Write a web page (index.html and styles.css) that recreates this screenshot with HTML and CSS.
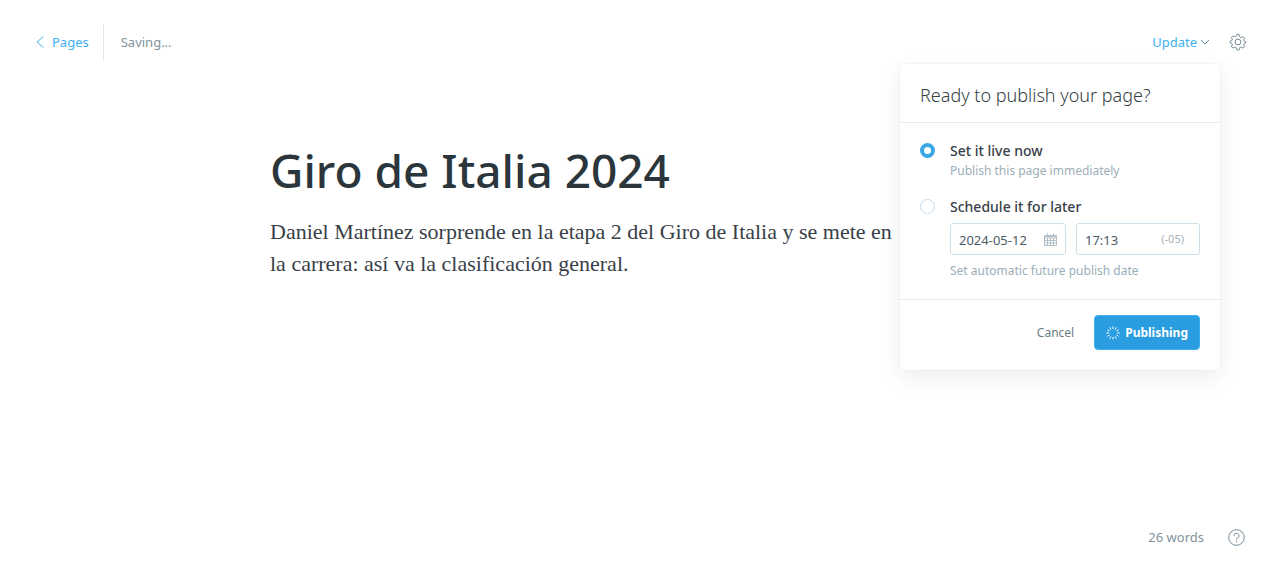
FILE: index.html
```html
<!DOCTYPE html>
<html lang="en">
<head>
<meta charset="utf-8">
<meta name="viewport" content="width=device-width, initial-scale=1">
<title>Giro de Italia 2024</title>
<link rel="stylesheet" href="styles.css">
</head>
<body>
<div class="editor">
  <header class="topbar">
    <div class="topbar-left">
      <a class="back" href="#"><svg class="back-icon" viewBox="0 0 8 12" aria-hidden="true"><path d="M7.500.5 1 6l6.500 5.500"/></svg>Pages</a>
      <span class="status">Saving...</span>
    </div>
    <div class="topbar-right">
      <div class="publish">
        <button class="update" type="button">Update<svg class="chevron" viewBox="0 0 10 6" aria-hidden="true"><path d="M1 1l4 4 4-4"/></svg></button>
        <form class="menu">
          <h2 class="menu-title">Ready to publish your page?</h2>
          <div class="menu-body">
            <div class="option">
              <input class="radio" type="radio" name="when" id="now" checked>
              <div class="option-text">
                <label class="option-label" for="now">Set it live now</label>
                <p class="hint">Publish this page immediately</p>
              </div>
            </div>
            <div class="option">
              <input class="radio" type="radio" name="when" id="later">
              <div class="option-text">
                <label class="option-label" for="later">Schedule it for later</label>
                <div class="fields">
                  <div class="field">
                    <input class="field-input" type="text" value="2024-05-12" aria-label="Date">
                    <svg class="calendar" viewBox="0 0 13 13" aria-hidden="true"><path d="M.5 2.500h12v10H.5zM.5 5h12M.5 7.500h12M.5 10h12M3.500 5v7.500M6.500 5v7.500M9.500 5v7.500M.5 3.500h12M3.500.3v2.500M9.500.3v2.500"/></svg>
                  </div>
                  <div class="field field-time">
                    <input class="field-input" type="text" value="17:13" aria-label="Time">
                    <span class="zone">(-05)</span>
                  </div>
                </div>
                <p class="hint">Set automatic future publish date</p>
              </div>
            </div>
          </div>
          <div class="menu-footer">
            <button class="cancel" type="button">Cancel</button>
            <button class="submit" type="button"><svg class="spinner" viewBox="-7 -7 14 14" aria-hidden="true"><path d="M0-6.500V-4M0 4v2.500M-6.500 0H-4M4 0h2.500M3.250-5.630 2-3.460M-3.250-5.630-2-3.460M3.250 5.630 2 3.460M-3.250 5.630-2 3.460M5.630-3.250 3.460-2M-5.630-3.250-3.460-2M5.630 3.250 3.460 2M-5.630 3.250-3.460 2"/></svg>Publishing</button>
          </div>
        </form>
      </div>
      <button class="icon-button" type="button" aria-label="Settings"><svg class="gear" viewBox="0 0 24 24" aria-hidden="true"><circle cx="12" cy="12" r="4.300"/><path d="M13.700 1.300l.6 2.400a2.200 2.200 0 0 0 3.100 1.300l2.200-1.200 2.300 2.300-1 2.100a2.200 2.200 0 0 0 1.300 3.100l1.600.5v1.400l-1.600.5a2.200 2.200 0 0 0-1.300 3.100l1 2.100-2.300 2.300-2.200-1.200a2.200 2.200 0 0 0-3.100 1.300l-.6 2.400h-3.400l-.6-2.400a2.200 2.200 0 0 0-3.100-1.300l-2.200 1.200-2.300-2.300 1-2.100a2.200 2.200 0 0 0-1.300-3.100L.2 13.200v-2.400l1.600-.5a2.200 2.200 0 0 0 1.300-3.100l-1-2.100 2.300-2.300 2.200 1.200a2.200 2.200 0 0 0 3.100-1.300l.6-2.400z"/></svg></button>
    </div>
  </header>
  <main class="post">
    <h1 class="post-title">Giro de Italia 2024</h1>
    <p class="post-text">Daniel Martínez sorprende en la etapa 2 del Giro de Italia y se mete en<br>la carrera: así va la clasificación general.</p>
  </main>
  <footer class="bottombar">
    <span class="count">26 words</span>
    <button class="icon-button" type="button" aria-label="Help"><svg class="help" viewBox="0 0 17 17" aria-hidden="true"><circle cx="8.500" cy="8.500" r="7.800"/><path d="M6 6.800a2.500 2.500 0 1 1 3.700 2.100c-.8.5-1.200.9-1.200 1.900M8.500 12v1.200"/></svg></button>
  </footer>
</div>
</body>
</html>
```
FILE: styles.css
```css
* {
  box-sizing: border-box;
}

body {
  margin: 0;
  background: #fff;
  color: #394047;
  font: 13px/20px "Noto Sans", "Open Sans", sans-serif;
}

h1, h2, p {
  margin: 0;
}

button {
  padding: 0;
  border: 0;
  background: none;
  font: inherit;
  cursor: pointer;
}

svg {
  display: block;
  flex: none;
  fill: none;
  stroke: currentColor;
}

.editor {
  display: flex;
  flex-direction: column;
  min-height: 100vh;
}

.topbar {
  display: flex;
  justify-content: space-between;
  align-items: center;
  padding: 24px 34px 0 36px;
}

.topbar-left,
.topbar-right {
  display: flex;
  align-items: center;
}

.back {
  display: flex;
  align-items: center;
  gap: 8px;
  height: 36px;
  padding-right: 14px;
  border-right: 1px solid #dfe7ec;
  color: #3eb0ef;
  text-decoration: none;
}

.back-icon {
  width: 8px;
  height: 12px;
}

.status {
  padding-left: 17px;
  color: #7f949d;
}

.topbar-right {
  gap: 20px;
}

.publish {
  position: relative;
}

.update {
  display: flex;
  align-items: center;
  gap: 3px;
  color: #3eb0ef;
}

.chevron {
  width: 10px;
  height: 6px;
  color: #5b91b0;
}

.icon-button {
  color: #738a94;
}

.gear {
  width: 16px;
  height: 16px;
  overflow: visible;
  stroke-width: 1.5;
}

.menu {
  position: absolute;
  top: calc(100% + 12px);
  right: -10px;
  z-index: 1;
  width: 320px;
  border-radius: 4px;
  background: #fff;
  box-shadow: 0 0 0 1px rgba(99, 114, 130, 0.06), 0 8px 22px rgba(27, 39, 51, 0.08);
}

.menu-title {
  padding: 19px 20px 15px;
  border-bottom: 1px solid #e3ecf2;
  color: #343f44;
  font-size: 18px;
  font-weight: 300;
  line-height: 24px;
}

.menu-body {
  display: grid;
  gap: 16px;
  padding: 18px 20px;
}

.option {
  display: flex;
  gap: 15px;
}

.radio {
  appearance: none;
  flex: none;
  width: 15px;
  height: 15px;
  margin: 2px 0 0;
  border: 1px solid #c5dbe8;
  border-radius: 50%;
  background: #fff;
}

.radio:checked {
  border: 4px solid #3aa7e6;
}

.option-text {
  flex: 1;
}

.option-label {
  display: block;
  font-size: 14px;
  font-weight: 500;
}

.hint {
  color: #9baeb8;
  font-size: 12px;
}

.fields {
  display: grid;
  grid-template-columns: 116fr 124fr;
  gap: 10px;
  margin: 6px 0;
}

.field {
  display: flex;
  align-items: center;
  min-width: 0;
  height: 32px;
  padding: 0 8px;
  border: 1px solid #cfdfe9;
  border-radius: 3px;
}

.field-time {
  padding-right: 15px;
}

.field-input {
  flex: 1;
  width: 0;
  min-width: 0;
  padding: 2px 0 0;
  border: 0;
  outline: 0;
  background: none;
  color: #4d5b63;
  font: inherit;
}

.calendar {
  width: 13px;
  height: 13px;
  color: #b4c0c7;
}

.zone {
  color: #a5b3bb;
  font-size: 11px;
}

.menu-footer {
  display: flex;
  justify-content: flex-end;
  align-items: center;
  gap: 20px;
  padding: 15px 20px 20px;
  border-top: 1px solid #e3ecf2;
}

.cancel {
  color: #687d87;
  font-size: 12px;
}

.submit {
  display: flex;
  align-items: center;
  gap: 5px;
  height: 35px;
  padding: 0 11px;
  border: 1px solid #3eb0ef;
  border-radius: 4px;
  background: #2a9de0;
  color: #fff;
  font-size: 12px;
  font-weight: 700;
}

.spinner {
  width: 14px;
  height: 14px;
}

.post {
  flex: 1;
  width: 100%;
  max-width: 740px;
  margin: 0 auto;
  padding-top: 80px;
}

.post-title {
  color: #2b363c;
  font-size: 46px;
  font-weight: 500;
  line-height: 60px;
}

.post-text {
  margin-top: 16px;
  font: 22px/32px Georgia, "Liberation Serif", serif;
}

.bottombar {
  display: flex;
  justify-content: flex-end;
  align-items: center;
  gap: 24px;
  padding: 0 35px 34px;
  color: #7f949d;
}

.help {
  width: 17px;
  height: 17px;
}
```
